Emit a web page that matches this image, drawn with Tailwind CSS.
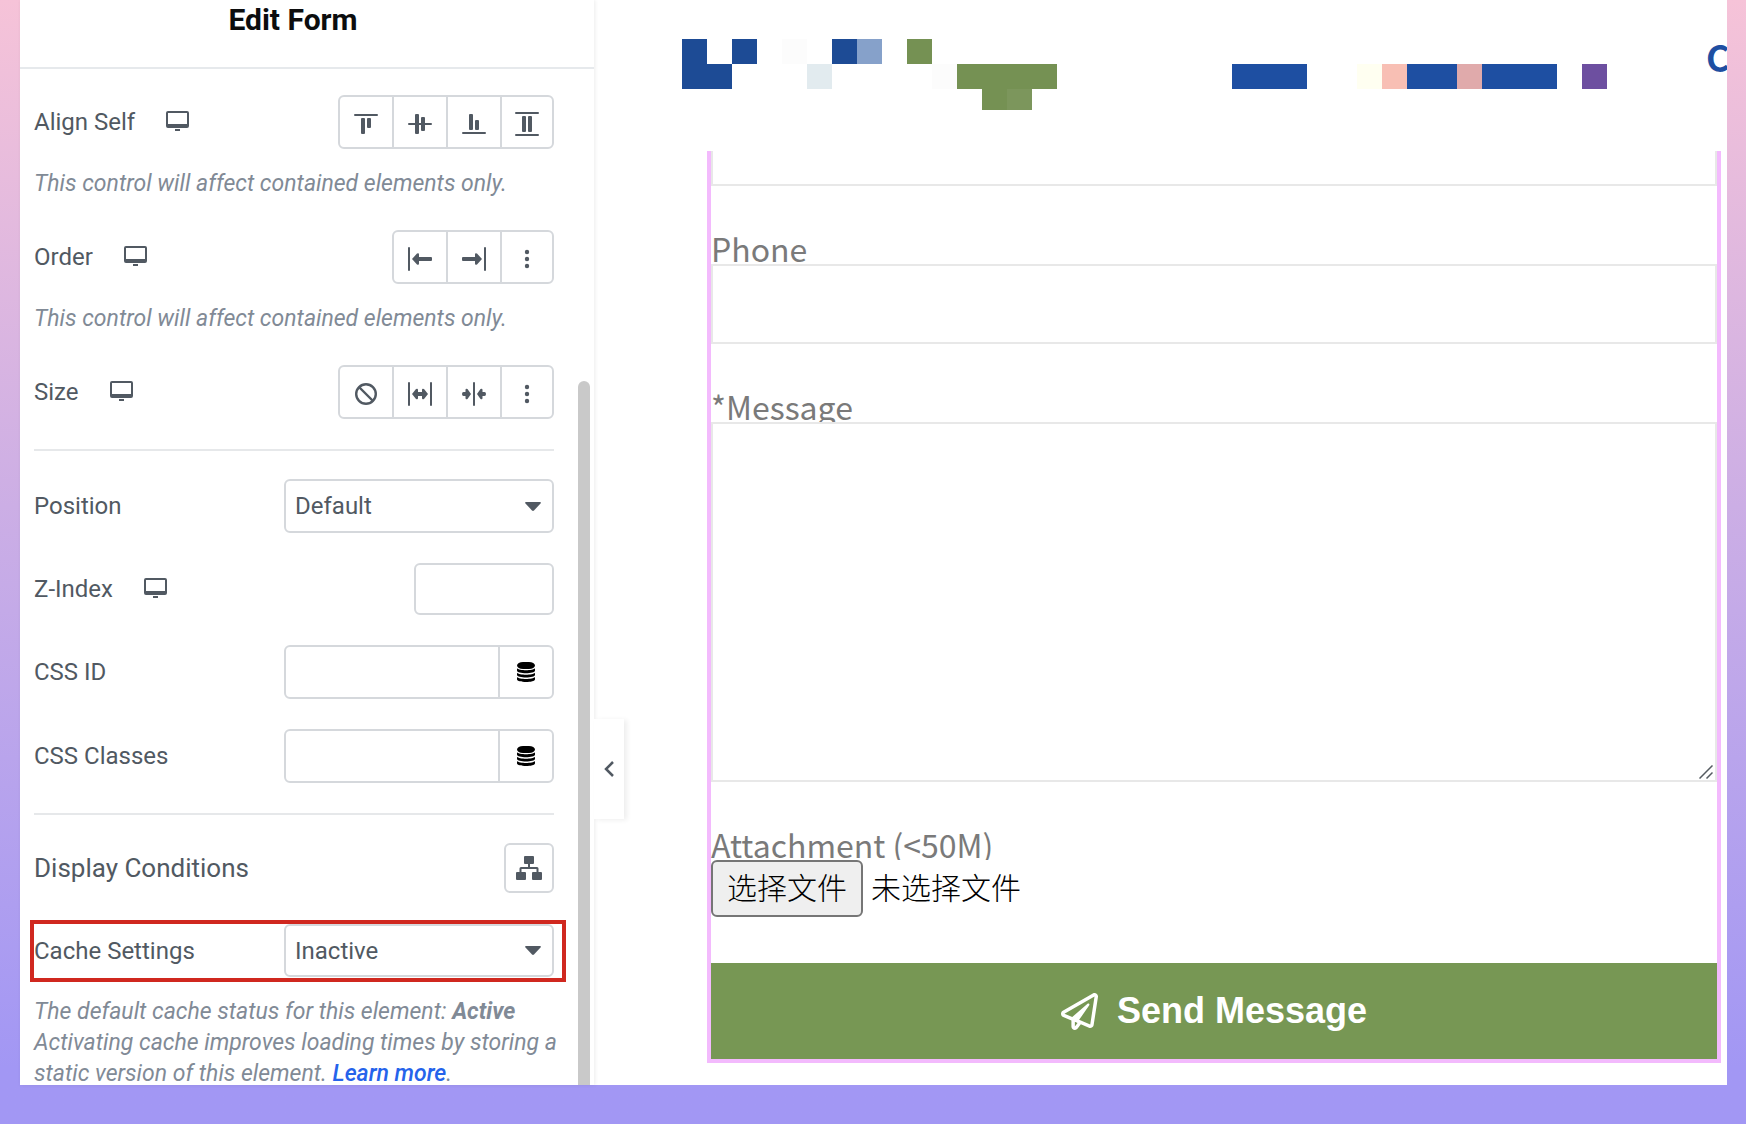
<!DOCTYPE html>
<html lang="en">
<head>
<meta charset="utf-8">
<title>Edit Form</title>
<script src="https://cdn.jsdelivr.net/npm/@tailwindcss/browser@4"></script>
</head>
<body class="bg-[#a297f4]">
<svg class="hidden">
  <symbol id="monitor" viewBox="0 0 23 20"><path fill-rule="evenodd" d="M2 0h19a2 2 0 0 1 2 2v13a2 2 0 0 1-2 2H2a2 2 0 0 1-2-2V2a2 2 0 0 1 2-2zm0 2v11h19V2zM9 18h5v2H9z"/></symbol>
  <symbol id="dots" viewBox="0 0 24 24"><circle cx="12" cy="5" r="2.2"/><circle cx="12" cy="12" r="2.2"/><circle cx="12" cy="19" r="2.2"/></symbol>
  <symbol id="database" viewBox="0 0 18 20"><rect y="0" width="18" height="7" rx="6" ry="3.5"/><path d="M0 6.200c2 2.600 16 2.600 18 0v2.300c0 3.600-18 3.600-18 0zM0 10.700c2 2.600 16 2.600 18 0v2c0 3.600-18 3.600-18 0zM0 15c2 2.600 16 2.600 18 0v2.200c0 3.700-18 3.700-18 0z"/></symbol>
  <symbol id="caret" viewBox="0 0 16 9"><path d="M1 0h14q1.500.3.500 1.500L9 8.500q-1 .8-2 0L.5 1.500Q-.5.300 1 0z"/></symbol>
</svg>
<div class="flex h-screen bg-linear-to-b from-[#f6c3d8] via-[#ccaee5] via-45% to-[#a297f4] to-95% pr-[19px] pb-[39px] pl-5 font-[Roboto,sans-serif] text-2xl leading-[30px] text-[#515962]">

  <aside class="relative z-10 w-[574px] shrink-0 bg-white shadow-[1px_0_4px_rgba(0,0,0,0.08)]">
    <div class="flex h-full flex-col overflow-hidden">
      <header class="shrink-0 border-b-2 border-[#e6e9ec] pb-[27px]">
        <h1 class="-ml-1 pr-6 text-center text-[30px] leading-10 font-bold text-[#0c0d0e]">Edit Form</h1>
      </header>
      <div class="pt-[26px] pr-10 pl-[14px]">
        <div class="flex h-[54px] items-center">
          <span>Align Self</span>
          <svg class="mb-[3px] ml-[31px] h-5 w-[23px] fill-current"><use href="#monitor"/></svg>
          <div class="ml-auto flex h-full divide-x-2 divide-[#d5d8dc] rounded-md border-2 border-[#d5d8dc]">
            <button aria-label="Start" class="flex w-[54px] items-center justify-center pt-1"><svg class="size-6 fill-current" viewBox="0 0 24 24"><rect y="2" width="24" height="2" rx="1"/><rect x="7" y="6" width="4" height="16" rx="1"/><rect x="13" y="6" width="4" height="10" rx="1"/></svg></button>
            <button aria-label="Center" class="flex w-[54px] items-center justify-center pt-1"><svg class="size-6 fill-current" viewBox="0 0 24 24"><rect y="11" width="24" height="2" rx="1"/><rect x="7" y="2" width="4" height="20" rx="1"/><rect x="13" y="5" width="4" height="14" rx="1"/></svg></button>
            <button aria-label="End" class="flex w-[54px] items-center justify-center pt-1"><svg class="size-6 fill-current" viewBox="0 0 24 24"><rect y="20" width="24" height="2" rx="1"/><rect x="7" y="2" width="4" height="16" rx="1"/><rect x="13" y="8" width="4" height="10" rx="1"/></svg></button>
            <button aria-label="Stretch" class="flex w-[50px] items-center justify-center pt-1"><svg class="size-6 fill-current" viewBox="0 0 24 24"><rect width="24" height="2" rx="1"/><rect y="22" width="24" height="2" rx="1"/><rect x="7" y="4" width="4" height="16" rx="1"/><rect x="13" y="4" width="4" height="16" rx="1"/></svg></button>
          </div>
        </div>
        <p class="mt-5 text-[23px] text-[#818a96] italic">This control will affect contained elements only.</p>

        <div class="mt-[31px] flex h-[54px] items-center">
          <span>Order</span>
          <svg class="mb-[3px] ml-[31px] h-5 w-[23px] fill-current"><use href="#monitor"/></svg>
          <div class="ml-auto flex h-full divide-x-2 divide-[#d5d8dc] rounded-md border-2 border-[#d5d8dc]">
            <button aria-label="First" class="flex w-[54px] items-center justify-center pt-1"><svg class="size-6 fill-current" viewBox="0 0 24 24"><rect width="2" height="24" rx="1"/><path d="M4 12l5-5.500q2-1 2 1V10h12q1 0 1 1v2q0 1-1 1H11v2.500q0 2-2 1z"/></svg></button>
            <button aria-label="Last" class="flex w-[54px] items-center justify-center pt-1"><svg class="size-6 fill-current" viewBox="0 0 24 24"><rect x="22" width="2" height="24" rx="1"/><path d="M20 12l-5-5.500q-2-1-2 1V10H1q-1 0-1 1v2q0 1 1 1h12v2.500q0 2 2 1z"/></svg></button>
            <button aria-label="Custom order" class="flex w-[50px] items-center justify-center pt-1"><svg class="size-6 fill-current"><use href="#dots"/></svg></button>
          </div>
        </div>
        <p class="mt-5 text-[23px] text-[#818a96] italic">This control will affect contained elements only.</p>

        <div class="mt-[31px] flex h-[54px] items-center">
          <span>Size</span>
          <svg class="mb-[3px] ml-[31px] h-5 w-[23px] fill-current"><use href="#monitor"/></svg>
          <div class="ml-auto flex h-full divide-x-2 divide-[#d5d8dc] rounded-md border-2 border-[#d5d8dc]">
            <button aria-label="None" class="flex w-[54px] items-center justify-center pt-1"><svg class="size-6 fill-none stroke-current stroke-[2.400]" viewBox="0 0 24 24"><circle cx="12" cy="12" r="9.800"/><path d="M5 5l14 14"/></svg></button>
            <button aria-label="Grow" class="flex w-[54px] items-center justify-center pt-1"><svg class="size-6 fill-current" viewBox="0 0 24 24"><rect width="2" height="24" rx="1"/><rect x="22" width="2" height="24" rx="1"/><path d="M4 12l4-5q2-1 2 1v2h4V8q0-2 2-1l4 5-4 5q-2 1-2-1v-2h-4v2q0 2-2 1z"/></svg></button>
            <button aria-label="Shrink" class="flex w-[54px] items-center justify-center pt-1"><svg class="size-6 fill-current" viewBox="0 0 24 24"><rect x="11" width="2" height="24" rx="1"/><path d="M9 12L5.500 7q-2-1-2 1v2H1.500Q0 10 0 12t1.500 2h2v2q0 2 2 1zM15 12l3.500-5q2-1 2 1v2h2q1.500 0 1.500 2t-1.500 2h-2v2q0 2-2 1z"/></svg></button>
            <button aria-label="Custom size" class="flex w-[50px] items-center justify-center pt-1"><svg class="size-6 fill-current"><use href="#dots"/></svg></button>
          </div>
        </div>

        <hr class="mt-[30px] border-t-2 border-[#e6e8ea]">

        <div class="mt-7 flex h-[54px] items-center justify-between">
          <label for="position">Position</label>
          <div class="relative h-full w-[270px]">
            <select id="position" class="size-full appearance-none rounded-md border-2 border-[#d5d8dc] bg-white px-[9px]"><option>Default</option></select>
            <svg class="pointer-events-none absolute top-[23px] right-[13px] h-[9px] w-4 fill-current"><use href="#caret"/></svg>
          </div>
        </div>

        <div class="mt-[30px] flex h-[52px] items-center">
          <label for="zindex">Z-Index</label>
          <svg class="mb-[3px] ml-[31px] h-5 w-[23px] fill-current"><use href="#monitor"/></svg>
          <input id="zindex" type="text" class="ml-auto h-full w-[140px] rounded-md border-2 border-[#d5d8dc] px-[9px]">
        </div>

        <div class="mt-[30px] flex h-[54px] items-center justify-between">
          <label for="cssid">CSS ID</label>
          <div class="flex h-full w-[270px] rounded-md border-2 border-[#d5d8dc]">
            <input id="cssid" type="text" class="min-w-0 flex-1 px-[9px]">
            <button aria-label="Dynamic tags for CSS ID" class="flex w-[54px] items-center justify-center border-l-2 border-[#d5d8dc] pr-px"><svg class="h-5 w-[18px] fill-black"><use href="#database"/></svg></button>
          </div>
        </div>

        <div class="mt-[30px] flex h-[54px] items-center justify-between">
          <label for="cssclasses">CSS Classes</label>
          <div class="flex h-full w-[270px] rounded-md border-2 border-[#d5d8dc]">
            <input id="cssclasses" type="text" class="min-w-0 flex-1 px-[9px]">
            <button aria-label="Dynamic tags for CSS Classes" class="flex w-[54px] items-center justify-center border-l-2 border-[#d5d8dc] pr-px"><svg class="h-5 w-[18px] fill-black"><use href="#database"/></svg></button>
          </div>
        </div>

        <hr class="mt-[30px] border-t-2 border-[#e6e8ea]">

        <div class="mt-7 flex h-[50px] items-center justify-between">
          <span class="text-[26px]">Display Conditions</span>
          <button aria-label="Display Conditions" class="flex size-[50px] items-center justify-center rounded-md border-2 border-[#d5d8dc]"><svg class="h-6 w-[26px] fill-current" viewBox="0 0 26 24"><rect x="8" width="10" height="8" rx="1"/><path d="M12 8h2v3h7q1.500 0 1.500 1.500V16h-2v-3h-15v3h-2v-3.500Q3.500 11 5 11h7z"/><rect y="16" width="10" height="8" rx="1"/><rect x="16" y="16" width="10" height="8" rx="1"/></svg></button>
        </div>

        <div class="mt-[27px] -mr-3 -ml-1 flex h-[62px] items-center justify-between border-4 border-[#d0281f] pr-2 pb-px">
          <label for="cache">Cache Settings</label>
          <div class="relative h-full w-[270px]">
            <select id="cache" class="size-full appearance-none rounded-md border-2 border-[#d5d8dc] bg-white px-[9px]"><option>Inactive</option></select>
            <svg class="pointer-events-none absolute top-[22px] right-[13px] h-[9px] w-4 fill-current"><use href="#caret"/></svg>
          </div>
        </div>
        <p class="mt-[14px] -mr-3 text-[23px] leading-[31px] text-[#818a96] italic">The default cache status for this element: <b>Active</b><br>Activating cache improves loading times by storing a<br>static version of this element. <a href="#" class="font-medium text-[#2563eb]">Learn more</a>.</p>
      </div>
    </div>
    <div class="absolute top-[381px] right-1 bottom-0 w-3 rounded-t-full bg-[#c9c9c9]"></div>
    <button aria-label="Hide panel" class="absolute top-[719px] left-full flex h-[100px] w-[30px] items-center justify-center bg-white shadow-[3px_1px_5px_rgba(0,0,0,0.07)]"><svg class="h-4 w-[10px] fill-none stroke-current stroke-[2.500]" viewBox="0 0 10 16"><path d="M9 1L2 8l7 7"/></svg></button>
  </aside>

  <main class="flex min-w-0 flex-1 flex-col overflow-hidden bg-white pb-[22px] font-['Noto_Sans_CJK_SC',sans-serif]">
    <header class="flex h-[151px] shrink-0 items-start overflow-hidden pt-[39px] pl-[88px]">
      <svg class="h-[71px] w-[375px] shrink-0" viewBox="0 0 375 71" shape-rendering="crispEdges">
        <path fill="#1d4b95" d="M0 0h25v25h25v25H0zM50 0h25v25H50zM150 0h25v25h-25z"/>
        <path fill="#86a1ca" d="M175 0h25v25h-25z"/>
        <path fill="#fcfcfc" d="M100 0h25v25h-25zM250 25h25v25h-25z"/>
        <path fill="#e2ebef" d="M125 25h25v25h-25z"/>
        <path fill="#759153" d="M225 0h25v25h-25zM275 25h100v25h-25v21h-50V50h-25z"/>
        <path fill="#7c965c" d="M325 50h25v21h-25z"/>
      </svg>
      <svg class="mt-[25px] ml-[175px] h-[25px] w-[375px] shrink-0" viewBox="0 0 375 25" shape-rendering="crispEdges">
        <path fill="#1e4fa2" d="M0 0h75v25H0zM175 0h50v25h-50zM250 0h75v25h-75z"/>
        <path fill="#fffff1" d="M125 0h25v25h-25z"/>
        <path fill="#f8bfb4" d="M150 0h25v25h-25z"/>
        <path fill="#e0aaab" d="M225 0h25v25h-25z"/>
        <path fill="#6d4fa0" d="M350 0h25v25h-25z"/>
      </svg>
      <a href="#" class="ml-auto w-[21px] shrink-0 text-[36px] leading-[34px] font-bold text-[#1e4fa2]">C</a>
    </header>

    <form class="mr-1.5 ml-[113px] flex flex-1 flex-col border-x-4 border-b-4 border-[#f3bafd] text-[32px] text-[#7a7a7a]">
      <input aria-label="Email" type="text" class="h-[35px] shrink-0 border-2 border-t-0 border-[#e8e8e8] px-4">
      <label for="phone" class="h-[78px] shrink-0 overflow-hidden pt-[46px] leading-8">Phone</label>
      <input id="phone" type="text" class="h-20 shrink-0 border-2 border-[#e8e8e8] px-4">
      <label for="message" class="h-[78px] shrink-0 overflow-hidden pt-[46px] leading-8">*Message</label>
      <div class="relative flex min-h-40 flex-1">
        <textarea id="message" class="w-full resize-none border-2 border-[#e8e8e8] p-4"></textarea>
        <svg class="pointer-events-none absolute right-1 bottom-[3px] size-[14px] fill-none stroke-[#555b61] stroke-[1.500]" viewBox="0 0 14 14"><path d="M.5 13.500L13.500.500M7.500 13.500l6-6"/></svg>
      </div>
      <label for="file" class="h-[78px] shrink-0 overflow-hidden pt-[46px] leading-8">Attachment (&lt;50M)</label>
      <div class="flex h-[57px] shrink-0 items-center gap-2 text-[30px] leading-8 font-light text-black">
        <input id="file" type="file" class="sr-only">
        <label for="file" class="flex h-full items-center rounded-md border-2 border-[#767676] bg-[#efefef] px-[14px] pb-1.5">选择文件</label>
        <span class="pb-1.5">未选择文件</span>
      </div>
      <button type="submit" class="mt-[46px] flex h-24 shrink-0 items-center justify-center gap-[19px] bg-[#779754] font-['Liberation_Sans',sans-serif] text-4xl font-bold text-white">
        <svg class="size-[37px] fill-current" viewBox="0 0 512 512"><path d="M440 6.500L24 246.400c-34.400 19.900-31.100 70.800 5.700 85.900L144 379.600V464c0 46.400 59.200 65.500 86.600 28.600l43.800-59.100 111.900 46.200c5.900 2.400 12.100 3.600 18.300 3.600 8.200 0 16.300-2.100 23.600-6.200 12.800-7.200 21.600-20 23.900-34.500l59.400-387.200c6.100-40.100-36.900-68.800-71.500-48.900zM192 464v-64.600l36.600 15.100L192 464zm212.600-28.700l-153.800-63.500L391 169.500c10.700-15.500-9.500-33.500-23.700-21.200L155.800 332.600 48 288 464 48l-59.400 387.300z"/></svg>
        Send Message
      </button>
    </form>
  </main>
</div>
</body>
</html>
